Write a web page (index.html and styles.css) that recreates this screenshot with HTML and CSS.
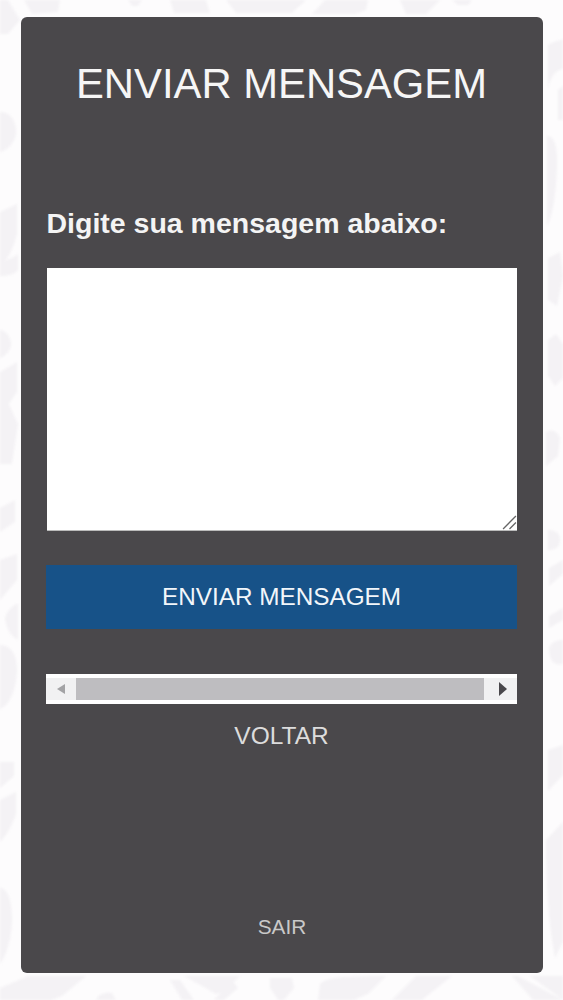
FILE: index.html
```html
<!DOCTYPE html>
<html lang="pt-BR">
<head>
<meta charset="utf-8">
<title>Enviar mensagem</title>
<link rel="stylesheet" href="styles.css">
</head>
<body>
<svg class="pattern" viewBox="0 0 563 1000" aria-hidden="true">
  <g fill="#f4f2f5">
    <path d="M0 0h8l12 20L8 34H0z"/>
    <path d="M24 0h36l-2 12-26 2z"/>
    <path d="M128 0h14l-4 6h-6z"/>
    <path d="M170 0h36l4 13h-36z"/>
    <path d="M226 0h80l-14 13h-56z"/>
    <path d="M325 0h43l-2 10-10 4h-44z"/>
    <path d="M400 0h40l-14 14h-20z"/>
    <path d="M452 0h20l-4 5h-10z"/>
    <path d="M0 112c12 0 17 12 16 22-1 8-8 16-16 18z"/>
    <path d="M0 212l17-8v30c-4 16-10 28-17 30z"/>
    <path d="M0 262c8-2 16-6 18-8v16c-3 4-10 6-18 6z"/>
    <path d="M0 330c6 0 12 8 11 16-2 6-6 10-11 12z"/>
    <path d="M0 372l17-10v30l-8 12 9 20-6 40H0z"/>
    <path d="M0 508l15-8v22l-15 10z"/>
    <path d="M0 560l17-6v26l-17 20z"/>
    <path d="M5 618c2-8 9-14 13-14v36c-7-3-12-12-13-22z"/>
    <path d="M0 645c10 0 17 8 17 24 0 16-6 36-17 40z"/>
    <path d="M0 762h14v14L0 788z"/>
    <path d="M0 800l16-8v22c-4 12-10 22-16 28z"/>
    <path d="M0 888c8 0 12 14 12 32s-6 36-12 44z"/>
    <path d="M548 45c6-4 11-4 15-6v30c-6 0-14 8-15 22z"/>
    <path d="M558 90l5-4v34h-5z"/>
    <path d="M547 136c5 0 10 5 10 24 0 28-4 56-10 66z"/>
    <path d="M548 258l12-6 3 24-6 30-9-6z"/>
    <path d="M548 340l8-6 7 10v34l-8 8-7-10z"/>
    <path d="M546 432c6-4 12 0 14 6l-2 18-12 10z"/>
    <path d="M548 530c6 0 12 2 12 10s-6 10-12 10z"/>
    <path d="M549 568l14-8v14l-14 12z"/>
    <path d="M549 616l14-8v12l-14 8z"/>
    <path d="M549 648c2-6 8-8 14-8v24c-8 2-14-2-14-16z"/>
    <path d="M548 750l15-5v30l-15 16z"/>
    <path d="M546 840l17-18v120l-8 16c-6-30-9-70-9-118z"/>
    <path d="M0 988l28-12h58l-24 20-10 4H0z"/>
    <path d="M96 1000c2-6 10-8 16-7l4 7z"/>
    <path d="M170 980h10l14 20h-12z"/>
    <path d="M184 976h56l-16 16-8 2z"/>
    <path d="M232 980l6 8-14 12h-10z"/>
    <path d="M270 978h22l2 10-10 12h-6l-8-12z"/>
    <path d="M320 984c6-6 16-8 66-8l-18 18-14 6h-36z"/>
    <path d="M416 976h36l-30 24h-30z"/>
    <path d="M512 976h6l45 24h-30z"/>
    <path d="M530 976h33v24z"/>
  </g>
</svg>
<main class="card">
  <h1 class="title">ENVIAR MENSAGEM</h1>
  <form class="form">
    <label class="label" for="msg">Digite sua mensagem abaixo:</label>
    <div class="field">
      <textarea class="textarea" id="msg"></textarea>
      <svg class="grip" viewBox="0 0 14 14" aria-hidden="true"><path d="M1 13 13 1M7 13 13 7" stroke="#666" stroke-width="1.2" fill="none"/></svg>
    </div>
    <button class="send" type="button">ENVIAR MENSAGEM</button>
    <div class="scrollbar" aria-hidden="true">
      <span class="arrow arrow-left"><svg viewBox="0 0 8 10" class="tri tri-left"><path d="M8 0v10L0 5z" fill="#a3a3a5"/></svg></span>
      <span class="thumb"></span>
      <span class="arrow arrow-right"><svg viewBox="0 0 8 10" class="tri tri-right" preserveAspectRatio="none"><path d="M0 0v10l8-5z" fill="#4a484c"/></svg></span>
    </div>
    <a class="back" href="#">VOLTAR</a>
  </form>
  <a class="exit" href="#">SAIR</a>
</main>
</body>
</html>
```

FILE: styles.css
```css
* { box-sizing: border-box; }
html, body { margin: 0; height: 100%; }
body {
  position: relative;
  height: 1000px;
  overflow: hidden;
  background: #fdfcfd;
  padding: 17px 20px 27px 21px;
  font-family: "Liberation Sans", Arial, sans-serif;
}
.pattern {
  position: absolute;
  inset: 0;
  width: 563px;
  height: 1000px;
  filter: blur(1px);
}
.card {
  position: relative;
  height: 956px;
  background: #4a484b;
  border-radius: 6px;
  padding: 44px 26px 0 25px;
  display: flex;
  flex-direction: column;
  align-items: stretch;
  color: #fff;
}
.title {
  margin: 0;
  font-size: 41.8px;
  line-height: 46px;
  font-weight: 400;
  text-align: center;
  color: #f6f6f6;
}
.form { display: flex; flex-direction: column; margin-top: 101px; }
.label {
  padding-left: 0.5px;
  font-weight: 700;
  font-size: 28.5px;
  line-height: 30px;
  color: #f4f4f4;
}
.field { position: relative; margin: 30px 0 0 1px; height: 263px; }
.textarea {
  display: block;
  width: 100%;
  height: 100%;
  border: 0;
  border-bottom: 1px solid #bbb;
  background: #fff;
  resize: none;
  outline: 0;
}
.grip { position: absolute; right: 0; bottom: 1px; width: 15px; height: 15px; }
.send {
  margin-top: 34px;
  height: 64px;
  border: 0;
  background: #175288;
  color: #f2f6fa;
  font: 400 24.3px "Liberation Sans", Arial, sans-serif;
  padding: 0;
}
.scrollbar {
  margin-top: 45px;
  height: 30px;
  background: #fff;
  padding: 4px 0;
  display: flex;
  align-items: stretch;
}
.arrow {
  background: #f1f1f2;
  display: flex;
  align-items: center;
  justify-content: center;
}
.arrow-left { width: 30px; }
.arrow-right { width: 33px; padding-left: 5px; }
.thumb { flex: 1; background: #bebdc0; }
.tri-left { width: 8px; height: 12px; }
.tri-right { width: 8px; height: 14px; }
.back {
  margin-top: 18px;
  text-align: center;
  font-size: 24.5px;
  line-height: 28px;
  color: #dcdcdc;
  text-decoration: none;
}
.exit {
  position: absolute;
  left: 0;
  right: 0;
  top: 897px;
  text-align: center;
  font-size: 20.8px;
  line-height: 26px;
  color: #c9c9c9;
  text-decoration: none;
}
```
